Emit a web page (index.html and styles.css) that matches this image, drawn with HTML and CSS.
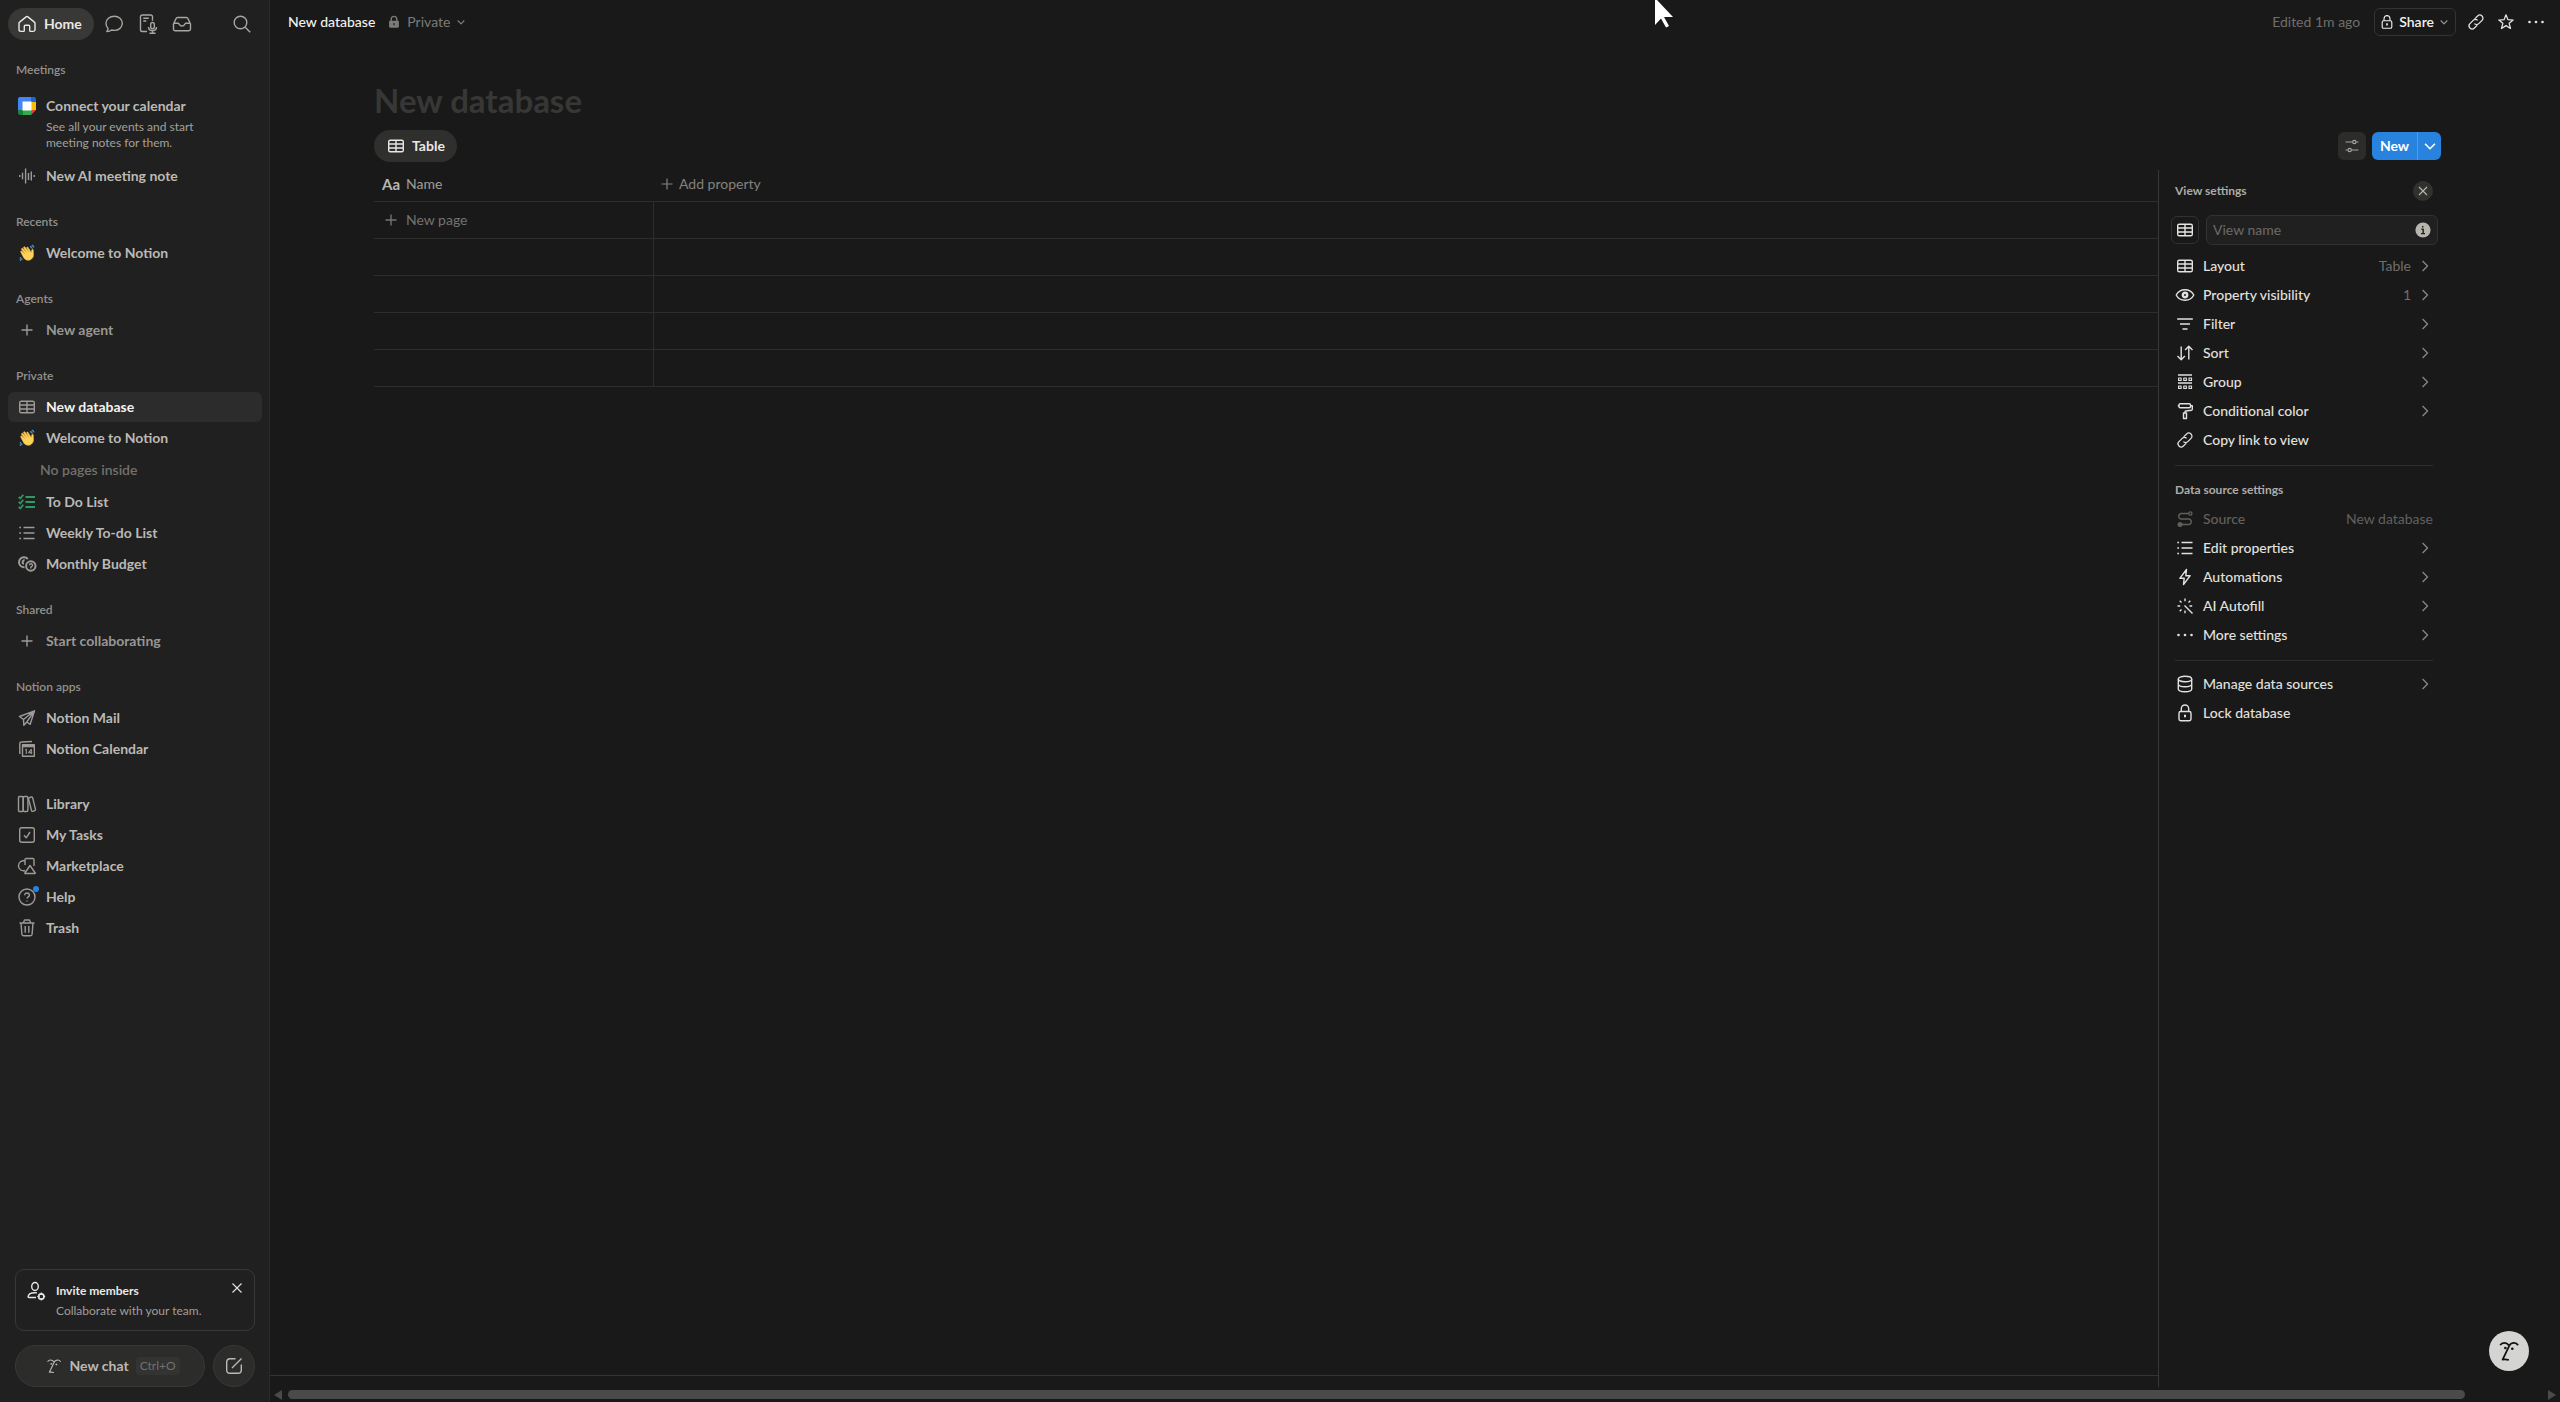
FILE: index.html
```html
<!DOCTYPE html>
<html lang="en">
<head>
<meta charset="utf-8">
<title>New database</title>
<link rel="stylesheet" href="styles.css">
</head>
<body>
<svg class="sprite" aria-hidden="true">
  <symbol id="home" viewBox="0 0 20 20"><path d="M2 9.300c0-.5.2-.9.6-1.200l6.500-5.200a1.500 1.500 0 0 1 1.800 0l6.500 5.200c.4.300.6.700.6 1.200v6.300a1.800 1.800 0 0 1-1.800 1.800h-2.700a.8.800 0 0 1-.8-.8v-4.300a1 1 0 0 0-1-1H8.300a1 1 0 0 0-1 1v4.300a.8.800 0 0 1-.8.800H3.800A1.800 1.800 0 0 1 2 15.600z"/></symbol>
  <symbol id="chat" viewBox="0 0 20 20"><path d="M10.300 2.200c4.500 0 8 3 8 7.100s-3.500 7.100-8 7.100c-.9 0-1.800-.1-2.600-.4-1 .9-2.800 1.600-4.900 1.600.9-.9 1.300-1.900 1.300-3A7 7 0 0 1 2 9.300c0-4.100 3.700-7.100 8.300-7.100z"/></symbol>
  <symbol id="note" viewBox="0 0 20 20"><path d="M9 17.500H4.300a1.800 1.800 0 0 1-1.800-1.800V2.800A1.800 1.800 0 0 1 4.300 1h8.400a1.800 1.800 0 0 1 1.800 1.800v4M5.300 4.300h5.500M5.300 7h3M14.500 8.500a1.800 1.800 0 0 1 1.800 1.800v2.600a1.800 1.800 0 0 1-3.600 0v-2.600a1.800 1.800 0 0 1 1.800-1.800zM10.500 13c0 2.300 1.800 3.700 4 3.700s4-1.400 4-3.700M14.500 16.700v2.500M11.500 19.200h6"/></symbol>
  <symbol id="inbox" viewBox="0 0 20 20"><path d="M1.500 10 4 4.600a1.800 1.800 0 0 1 1.700-1.100h8.600A1.800 1.800 0 0 1 16 4.600l2.500 5.400v5a1.700 1.700 0 0 1-1.700 1.700H3.200A1.700 1.700 0 0 1 1.500 15zM1.500 9.200h4.700c1 0 1 2.800 3.800 2.800s2.800-2.800 3.800-2.800h4.700"/></symbol>
  <symbol id="search" viewBox="0 0 20 20"><circle cx="8.500" cy="8.500" r="6.300"/><path d="m13.200 13.200 5 5"/></symbol>
  <symbol id="gcal" viewBox="0 0 18 18"><path d="M2 0h11v5H5v8H0V2a2 2 0 0 1 2-2z" fill="#4285f4"/><path d="M13 0h3a2 2 0 0 1 2 2v3h-5z" fill="#1967d2"/><path d="M13 5h5v8h-5z" fill="#fbbc04"/><path d="M5 13h8v5H5z" fill="#34a853"/><path d="M0 13h5v5H2a2 2 0 0 1-2-2z" fill="#188038"/><path d="M13 13h5l-5 5z" fill="#ea4335"/><path d="M4.500 4.500h9v9h-9z" fill="#fff"/></symbol>
  <symbol id="wave" viewBox="0 0 20 20"><path d="M3.800 9.200c-.6-.9.500-1.800 1.200-1L8 11 4.600 6.600c-.6-1 .6-1.900 1.400-1l3.500 4-2.900-4.700c-.5-1 .8-1.700 1.400-.8l3.700 5-1.900-4c-.4-1 .8-1.500 1.300-.7l3.100 5c.3-1 .1-2.300.9-3 .8-.5 1.300.2 1.200 1l.2 4.200c.1 2.400-1.300 4.500-3.400 5.300-2.600.9-4.800.1-6.300-1.900z" fill="#ffd25a" stroke="#f2b13a" stroke-width=".6"/><path d="M13 3.500c1.300.3 2 1.100 2.300 2.200M14.800 2.200c1.200.4 1.800 1 2.200 2.200M3.200 14.200c.3 1.300.9 2 2.200 2.400M2.800 16.500c.3.500.7.900 1.300 1.200" fill="none" stroke="#4d93c8" stroke-width="1.300"/></symbol>
  <symbol id="bars" viewBox="0 0 20 20"><path d="M2.700 9v2M5.500 6.700v6.600M8.600 2.500v15M11.500 7v7M14.300 5.500v9M17.200 9v2"/></symbol>
  <symbol id="plus" viewBox="0 0 20 20"><path d="M10 4.500v11M4.500 10h11"/></symbol>
  <symbol id="table" viewBox="0 0 20 20"><rect x="2.700" y="4.200" width="14.600" height="11.600" rx="1.600"/><path d="M2.700 8h14.600M2.700 12h14.600M10 4.200v11.600"/></symbol>
  <symbol id="checks" viewBox="0 0 20 20"><path d="M8.500 5h9.500M8.500 10h9.500M8.500 15h9.500M1.800 4.800l1.500 1.700 3-3.700M1.800 9.800l1.500 1.700 3-3.700M1.800 14.800l1.500 1.700 3-3.700"/></symbol>
  <symbol id="list" viewBox="0 0 20 20"><path d="M6.500 4.500h11M6.500 10h11M6.500 15.500h11M2.300 4.500H4M2.300 10H4M2.300 15.500H4"/></symbol>
  <symbol id="coins" viewBox="0 0 20 20"><path d="M7.500 13.200A5 5 0 1 1 10.800 5M7.700 6.300c-2.400-.4-2.900 3.400-.7 3.500" stroke-width="2"/><circle cx="13.800" cy="12" r="4.700" stroke-width="2"/><path d="M12.500 11.200a1.500 1.500 0 1 1 2.500 1.100l-1.200.8v1.300"/></symbol>
  <symbol id="plane" viewBox="0 0 20 20"><path d="M17.500 2.800 2.500 8.500l4 3 .3 5.700 3-3.200 3.400 2.300zM6.500 11.500l11-8.700-7.700 11.200"/></symbol>
  <symbol id="cal" viewBox="0 0 20 20"><path d="M2.800 15V4.600C2.800 3.600 3.500 3 4.500 3L15 2.500M5.500 5.800h11.800v11.500H5.500z"/><path d="M5.500 7h11.800" stroke-width="2.600"/><path d="m8.300 11 1-.7v4.800M14.300 15.100v-4.800l-2.700 3.400h3.600" stroke-width="1.100"/></symbol>
  <symbol id="library" viewBox="0 0 20 20"><rect x="1.500" y="2.500" width="4.700" height="15" rx="1.200"/><rect x="6.200" y="2.500" width="4.700" height="15" rx="1.200"/><path d="m12 3.900 2.300-.9c.6-.2 1.100 0 1.300.7l2.900 11.700c.1.600-.1 1-.7 1.200l-2 .7c-.6.200-1 0-1.200-.6L11.500 5c-.2-.6 0-.9.500-1.100z"/></symbol>
  <symbol id="task" viewBox="0 0 20 20"><rect x="2.700" y="2.700" width="14.600" height="14.600" rx="2"/><path d="m7 10.300 2.200 2.500L13 7"/></symbol>
  <symbol id="market" viewBox="0 0 20 20"><path d="M8 14.500A5 5 0 1 1 8 5M8 9V3.700C8 3 8.400 2.500 9.200 2.500h6.600c.8 0 1.200.5 1.200 1.200V10M13 9.500l5.200 7.500c.2.300 0 .5-.3.500H8.200c-.3 0-.5-.3-.3-.5z"/></symbol>
  <symbol id="help" viewBox="0 0 20 20"><circle cx="10" cy="10" r="8"/><path d="M7.700 8.200c0-3 4.700-2.900 4.700 0 0 1.700-2.300 1.700-2.300 3.400M10 13.500v1"/></symbol>
  <symbol id="trash" viewBox="0 0 20 20"><path d="M2.500 5h15M6.500 5l.6-2.300c.1-.5.500-.7 1-.7h3.800c.5 0 .9.200 1 .7l.6 2.300M4 5l.9 11.300c.1 1 .7 1.500 1.600 1.500h7c.9 0 1.500-.5 1.600-1.500L16 5M8.200 8v6.800M11.800 8v6.800"/></symbol>
  <symbol id="member" viewBox="0 0 20 20"><ellipse cx="9" cy="5.500" rx="3.300" ry="4"/><path d="M10 16.500H3c-.6 0-1-.3-.9-.9.400-2.300 3-3.900 6.700-3.900.8 0 1.500.1 2.200.2"/><circle cx="15.300" cy="15.500" r="2.700" stroke-width="1.700"/><path d="M15.300 11.600v2.200M15.300 17.200v2.200M11.400 15.500h2.200M17 15.500h2.200" stroke-width="1.200"/></symbol>
  <symbol id="x" viewBox="0 0 20 20"><path d="m5 5 10 10M15 5 5 15"/></symbol>
  <symbol id="face" viewBox="0 0 20 20"><path d="M2 4.700C3.500 2 7.800 1.700 9.800 4.800M10 5.500c1.500-3.400 6.300-4.100 8.300-.8M10.200 5.300 4.200 17.800c2-.3 3.700-.2 5.700.4"/><circle cx="6.700" cy="7.300" r="1.200" fill="currentColor" stroke="none"/><circle cx="13" cy="8" r="1.200" fill="currentColor" stroke="none"/></symbol>
  <symbol id="compose" viewBox="0 0 20 20"><path d="M11.500 2.800H6A3.300 3.300 0 0 0 2.700 6v8A3.300 3.300 0 0 0 6 17.300h8a3.300 3.300 0 0 0 3.300-3.300V8.500M8 12l9.500-9.500"/></symbol>
  <symbol id="lockfill" viewBox="0 0 20 20"><path d="M6 9V6a4 4 0 0 1 8 0v3"/><path d="M4.500 8.200h11c.8 0 1.500.6 1.500 1.400v7c0 .9-.7 1.600-1.500 1.600h-11c-.8 0-1.500-.7-1.500-1.600v-7c0-.8.700-1.400 1.500-1.400zm4.700 3.300v3.300h1.600v-3.300z" fill="currentColor" fill-rule="evenodd" stroke="none"/></symbol>
  <symbol id="lock" viewBox="0 0 20 20"><path d="M6.300 8.500V5.700a3.700 3.700 0 0 1 7.400 0v2.800"/><rect x="4" y="8.500" width="12" height="9.300" rx="1.700"/><path d="M10 11.700v2.600" stroke-width="2"/></symbol>
  <symbol id="down" viewBox="0 0 20 20"><path d="m4.500 7.500 5.500 5.500 5.500-5.500"/></symbol>
  <symbol id="right" viewBox="0 0 20 20"><path d="m7.300 4.500 5.500 5.500-5.500 5.500"/></symbol>
  <symbol id="link" viewBox="0 0 20 20"><path d="m8.500 6.500 3.300-3.200a3.400 3.400 0 0 1 4.900 4.900l-3.600 3.600a3.400 3.400 0 0 1-4.900 0M11.500 13.500l-3.300 3.200a3.400 3.400 0 0 1-4.900-4.900l3.600-3.600a3.400 3.400 0 0 1 4.900 0"/></symbol>
  <symbol id="star" viewBox="0 0 20 20"><path d="m10 2 2.200 5.400 5.800.4-4.500 3.700 1.500 5.700-5-3.200-5 3.200 1.500-5.700L2 7.800l5.800-.4z"/></symbol>
  <symbol id="dots" viewBox="0 0 20 20"><g fill="currentColor" stroke="none"><circle cx="3.500" cy="10" r="1.300"/><circle cx="10" cy="10" r="1.300"/><circle cx="16.500" cy="10" r="1.300"/></g></symbol>
  <symbol id="sliders" viewBox="0 0 20 20"><path d="M2 5h8.500M15.300 5H18M2 15h2.700M9.500 15H18"/><circle cx="12.900" cy="5" r="2.100"/><circle cx="7.100" cy="15" r="2.100"/></symbol>
  <symbol id="info" viewBox="0 0 20 20"><circle cx="10" cy="10" r="9.500" fill="#b8b5af" stroke="none"/><path d="M8 9h2.200v5.500M7.500 14.500h5M9.700 5v1.800" stroke="#202020" stroke-width="1.800"/></symbol>
  <symbol id="eye" viewBox="0 0 20 20"><path d="M1.200 10C3 6.500 6.200 4.700 10 4.700s7 1.800 8.800 5.300c-1.800 3.500-5 5.300-8.800 5.300S3 13.500 1.200 10z"/><circle cx="10" cy="10" r="2.200" stroke-width="2.400"/></symbol>
  <symbol id="filter" viewBox="0 0 20 20"><path d="M2.200 5h15.600M5 10h10M7.500 15h5"/></symbol>
  <symbol id="sort" viewBox="0 0 20 20"><path d="M6.200 3.500v13M2.500 13l3.700 3.700L9.900 13M13.800 16.500v-13M10.100 7l3.700-3.700L17.500 7"/></symbol>
  <symbol id="group" viewBox="0 0 20 20"><path d="M3 3h14M3 11h14"/><path d="M3.600 6h2.500v2.500H3.600zM8.800 6h2.500v2.500H8.800zM14 6h2.500v2.500H14zM3.600 14h2.500v2.500H3.600zM8.800 14h2.500v2.500H8.800zM14 14h2.500v2.500H14z" stroke-width="1.200"/></symbol>
  <symbol id="roller" viewBox="0 0 20 20"><rect x="4" y="2.700" width="11.500" height="4" rx="1.300"/><path d="M4 4.700H2.800M15.500 4.700h1.800v3.600c0 .5-.3.800-.8.900l-5.700.8c-.5.100-.8.400-.8.900v1M8.500 12h3v5.500h-3z"/></symbol>
  <symbol id="source" viewBox="0 0 20 20"><path d="M13 4.500H6a2.800 2.800 0 0 0 0 5.500h8a2.800 2.800 0 0 1 0 5.500H6.500"/><circle cx="15.300" cy="4.500" r="1.600"/><circle cx="5" cy="15.500" r="1.800" fill="currentColor"/></symbol>
  <symbol id="bolt" viewBox="0 0 20 20"><path d="M11.500 2.500 4.800 11.300h4.400l-.7 6.200 6.700-8.800h-4.400z"/></symbol>
  <symbol id="wand" viewBox="0 0 20 20"><path d="m9.500 9.500 8 8M10 2.500v2.700M10 14.500v2.700M2.500 10h2.700M14.500 10h2.700M4.700 4.700l1.800 1.800M15.300 4.700l-1.800 1.800M4.700 15.300l1.800-1.800"/></symbol>
  <symbol id="db" viewBox="0 0 20 20"><ellipse cx="10" cy="5" rx="6.700" ry="2.700"/><path d="M3.300 5v10c0 1.500 3 2.700 6.700 2.700s6.700-1.200 6.700-2.700V5M3.300 10c0 1.500 3 2.700 6.700 2.700s6.700-1.200 6.700-2.700"/></symbol>
</svg>

<div class="app">
  <aside class="sidebar">
    <nav class="switcher" aria-label="Workspace">
      <a class="pill" href="#"><svg class="icon"><use href="#home"/></svg>Home</a>
      <button class="tool" aria-label="Chat"><svg class="icon"><use href="#chat"/></svg></button>
      <button class="tool" aria-label="Meeting notes"><svg class="icon"><use href="#note"/></svg></button>
      <button class="tool" aria-label="Inbox"><svg class="icon"><use href="#inbox"/></svg></button>
      <button class="tool search" aria-label="Search"><svg class="icon"><use href="#search"/></svg></button>
    </nav>
    <nav class="sections" aria-label="Pages">
      <section class="section">
        <h2 class="label">Meetings</h2>
        <a class="connect" href="#">
          <svg class="gcal"><use href="#gcal"/></svg>
          <span class="connect-text"><span class="connect-title">Connect your calendar</span><span class="small">See all your events and start<br>meeting notes for them.</span></span>
        </a>
        <a class="item" href="#"><svg class="icon"><use href="#bars"/></svg>New AI meeting note</a>
      </section>
      <section class="section">
        <h2 class="label">Recents</h2>
        <a class="item" href="#"><svg class="icon"><use href="#wave"/></svg>Welcome to Notion</a>
      </section>
      <section class="section">
        <h2 class="label">Agents</h2>
        <a class="item dim" href="#"><svg class="icon"><use href="#plus"/></svg>New agent</a>
      </section>
      <section class="section">
        <h2 class="label">Private</h2>
        <a class="item active" href="#"><svg class="icon"><use href="#table"/></svg>New database</a>
        <a class="item" href="#"><svg class="icon"><use href="#wave"/></svg>Welcome to Notion</a>
        <p class="empty">No pages inside</p>
        <a class="item" href="#"><svg class="icon green"><use href="#checks"/></svg>To Do List</a>
        <a class="item" href="#"><svg class="icon"><use href="#list"/></svg>Weekly To-do List</a>
        <a class="item" href="#"><svg class="icon"><use href="#coins"/></svg>Monthly Budget</a>
      </section>
      <section class="section">
        <h2 class="label">Shared</h2>
        <a class="item dim" href="#"><svg class="icon"><use href="#plus"/></svg>Start collaborating</a>
      </section>
      <section class="section">
        <h2 class="label">Notion apps</h2>
        <a class="item" href="#"><svg class="icon"><use href="#plane"/></svg>Notion Mail</a>
        <a class="item" href="#"><svg class="icon"><use href="#cal"/></svg>Notion Calendar</a>
      </section>
      <section class="section utilities">
        <a class="item" href="#"><svg class="icon"><use href="#library"/></svg>Library</a>
        <a class="item" href="#"><svg class="icon"><use href="#task"/></svg>My Tasks</a>
        <a class="item" href="#"><svg class="icon"><use href="#market"/></svg>Marketplace</a>
        <a class="item help" href="#"><svg class="icon"><use href="#help"/></svg>Help<span class="badge"></span></a>
        <a class="item" href="#"><svg class="icon"><use href="#trash"/></svg>Trash</a>
      </section>
    </nav>
    <div class="foot">
      <div class="invite">
        <svg class="icon"><use href="#member"/></svg>
        <div class="invite-text"><strong>Invite members</strong><span>Collaborate with your team.</span></div>
        <button class="dismiss" aria-label="Dismiss"><svg class="icon s18"><use href="#x"/></svg></button>
      </div>
      <div class="chatbar">
        <button class="newchat"><svg class="icon"><use href="#face"/></svg>New chat<kbd>Ctrl+O</kbd></button>
        <button class="compose" aria-label="New page"><svg class="icon"><use href="#compose"/></svg></button>
      </div>
    </div>
  </aside>

  <main class="main">
    <header class="topbar">
      <a class="crumb" href="#">New database</a>
      <button class="privacy"><svg class="icon s14"><use href="#lockfill"/></svg>Private<svg class="icon s12"><use href="#down"/></svg></button>
      <span class="edited">Edited 1m ago</span>
      <button class="share"><svg class="icon s16"><use href="#lock"/></svg>Share<svg class="icon s12"><use href="#down"/></svg></button>
      <button class="action" aria-label="Copy link"><svg class="icon s18"><use href="#link"/></svg></button>
      <button class="action" aria-label="Favorite"><svg class="icon s18"><use href="#star"/></svg></button>
      <button class="action" aria-label="More"><svg class="icon"><use href="#dots"/></svg></button>
    </header>
    <h1 class="title">New database</h1>
    <div class="toolbar">
      <button class="tab"><svg class="icon"><use href="#table"/></svg>Table</button>
      <button class="settings" aria-label="View settings"><svg class="icon s16"><use href="#sliders"/></svg></button>
      <div class="new"><button class="new-main">New</button><button class="new-more" aria-label="Templates"><svg class="icon s18"><use href="#down"/></svg></button></div>
    </div>
    <div class="content">
      <div class="tablearea">
        <table class="grid">
          <thead>
            <tr><th><span class="head"><span class="aa">Aa</span>Name</span></th><th><button class="head add"><svg class="icon"><use href="#plus"/></svg>Add property</button></th></tr>
          </thead>
          <tbody>
            <tr><td><button class="newpage"><svg class="icon"><use href="#plus"/></svg>New page</button></td><td></td></tr>
            <tr><td></td><td></td></tr>
            <tr><td></td><td></td></tr>
            <tr><td></td><td></td></tr>
            <tr><td></td><td></td></tr>
          </tbody>
        </table>
        <div class="calc"></div>
      </div>
      <aside class="panel">
        <div class="panel-head"><h2>View settings</h2><button class="close" aria-label="Close"><svg class="icon s16"><use href="#x"/></svg></button></div>
        <div class="namerow">
          <button class="viewicon" aria-label="View icon"><svg class="icon"><use href="#table"/></svg></button>
          <div class="field"><input type="text" placeholder="View name" aria-label="View name"><svg class="icon s16"><use href="#info"/></svg></div>
        </div>
        <div class="rows">
          <button class="row"><svg class="icon"><use href="#table"/></svg>Layout<span class="value">Table</span><svg class="icon s18 chev"><use href="#right"/></svg></button>
          <button class="row"><svg class="icon"><use href="#eye"/></svg>Property visibility<span class="value">1</span><svg class="icon s18 chev"><use href="#right"/></svg></button>
          <button class="row"><svg class="icon"><use href="#filter"/></svg>Filter<span class="value"></span><svg class="icon s18 chev"><use href="#right"/></svg></button>
          <button class="row"><svg class="icon"><use href="#sort"/></svg>Sort<span class="value"></span><svg class="icon s18 chev"><use href="#right"/></svg></button>
          <button class="row"><svg class="icon"><use href="#group"/></svg>Group<span class="value"></span><svg class="icon s18 chev"><use href="#right"/></svg></button>
          <button class="row"><svg class="icon"><use href="#roller"/></svg>Conditional color<span class="value"></span><svg class="icon s18 chev"><use href="#right"/></svg></button>
          <button class="row"><svg class="icon s18"><use href="#link"/></svg>Copy link to view</button>
        </div>
        <hr>
        <h2 class="group-title">Data source settings</h2>
        <div class="rows">
          <button class="row off" disabled><svg class="icon"><use href="#source"/></svg>Source<span class="value end">New database</span></button>
          <button class="row"><svg class="icon"><use href="#list"/></svg>Edit properties<span class="value"></span><svg class="icon s18 chev"><use href="#right"/></svg></button>
          <button class="row"><svg class="icon"><use href="#bolt"/></svg>Automations<span class="value"></span><svg class="icon s18 chev"><use href="#right"/></svg></button>
          <button class="row"><svg class="icon"><use href="#wand"/></svg>AI Autofill<span class="value"></span><svg class="icon s18 chev"><use href="#right"/></svg></button>
          <button class="row"><svg class="icon"><use href="#dots"/></svg>More settings<span class="value"></span><svg class="icon s18 chev"><use href="#right"/></svg></button>
        </div>
        <hr>
        <div class="rows last">
          <button class="row"><svg class="icon"><use href="#db"/></svg>Manage data sources<span class="value"></span><svg class="icon s18 chev"><use href="#right"/></svg></button>
          <button class="row"><svg class="icon"><use href="#lock"/></svg>Lock database</button>
        </div>
      </aside>
    </div>
    <div class="scrollbar" aria-hidden="true">
      <svg class="arrow" viewBox="0 0 8 10"><path d="M8 0v10L0 5z"/></svg>
      <div class="track"><div class="thumb"></div></div>
      <svg class="arrow" viewBox="0 0 8 10"><path d="M0 0v10l8-5z"/></svg>
    </div>
  </main>
</div>
<button class="fab" aria-label="Ask AI"><svg class="icon"><use href="#face"/></svg></button>
<svg class="pointer" viewBox="0 0 18 28" aria-hidden="true"><path d="M0 0h2l16 17H9l5 9-3 1.500-5-9L0 25z"/></svg>
</body>
</html>
```
FILE: styles.css
```css
* { box-sizing: border-box; }

:root {
  --line: #2d2d2c;
  --muted: #7d7b78;
}

body {
  margin: 0;
  background: #191919;
  color: #e6e5e3;
  font: 14px/20px "Lato", "Liberation Sans", sans-serif;
}

a { color: inherit; text-decoration: none; }

button {
  display: flex;
  align-items: center;
  margin: 0;
  padding: 0;
  border: 0;
  background: none;
  color: inherit;
  font: inherit;
}

h1, h2, p { margin: 0; font: inherit; }

.sprite { position: absolute; width: 0; height: 0; }

.icon {
  flex: none;
  width: 20px;
  height: 20px;
  fill: none;
  stroke: currentColor;
  stroke-width: 1.4;
  stroke-linecap: butt;
  stroke-linejoin: round;
}
.icon.s18 { width: 18px; height: 18px; }
.icon.s16 { width: 16px; height: 16px; }
.icon.s14 { width: 14px; height: 14px; stroke-width: 2; }
.icon.s12 { width: 12px; height: 12px; stroke-width: 2; }

.app { display: flex; min-height: 100vh; }

/* Sidebar */
.sidebar {
  display: flex;
  flex: none;
  flex-direction: column;
  width: 270px;
  padding: 8px 7px 15px 8px;
  border-right: 1px solid #2a2a2a;
  background: #202020;
}

.switcher { display: flex; align-items: center; height: 32px; color: #a8a6a2; }
.pill {
  display: flex;
  align-items: center;
  gap: 7px;
  height: 32px;
  margin-right: 3px;
  padding: 0 12px 0 9px;
  border-radius: 16px;
  background: #383836;
  color: #e9e8e6;
  font-weight: 700;
}
.tool { justify-content: center; width: 34px; height: 32px; }
.tool.search { margin-left: auto; margin-right: 3px; }

.sections { display: flex; flex-direction: column; gap: 16px; margin-top: 15px; }
.section { display: flex; flex-direction: column; gap: 1px; }
.utilities { margin-top: 9px; }

.label {
  padding: 0 8px;
  color: #93918d;
  font-size: 12px;
  font-weight: 600;
  line-height: 30px;
}

.item {
  display: flex;
  align-items: center;
  gap: 9px;
  height: 30px;
  padding: 0 9px;
  border-radius: 6px;
  color: #bbb9b5;
  font-weight: 700;
}
.item .icon { color: #9d9b97; }
.item.dim { color: #999793; }
.item.active { background: #2c2c2c; color: #f3f2f0; }
.item .icon.green { color: #2d9964; stroke-width: 1.8; }
.help { position: relative; }
.badge {
  position: absolute;
  top: 4px;
  left: 25px;
  width: 6px;
  height: 6px;
  border-radius: 50%;
  background: #2383e2;
}
.empty { padding-left: 32px; color: #73716e; font-weight: 600; line-height: 32px; }

.connect { display: flex; gap: 10px; padding: 10px 10px 9px; color: #bbb9b5; }
.gcal { flex: none; width: 18px; height: 18px; margin-top: 1px; }
.connect-text { display: flex; flex-direction: column; gap: 3px; }
.connect-title { font-weight: 700; }
.small { color: #a3a19d; font-size: 12px; line-height: 16px; }

.foot { display: flex; flex-direction: column; gap: 14px; margin-top: auto; padding: 0 7px; }
.invite {
  display: flex;
  gap: 10px;
  height: 62px;
  padding: 11px 8px 11px 10px;
  border: 1px solid #383836;
  border-radius: 9px;
}
.invite-text {
  display: flex;
  flex: 1;
  flex-direction: column;
  color: #a09e9a;
  font-size: 12px;
}
.invite-text strong { color: #e9e8e6; }
.dismiss { align-self: flex-start; margin-top: -2px; }
.dismiss .icon { stroke-width: 1.2; }
.chatbar { display: flex; gap: 8px; }
.newchat, .compose {
  justify-content: center;
  height: 42px;
  border: 1px solid #383836;
  border-radius: 21px;
  background: #2c2c2b;
  color: #bbb9b5;
}
.newchat { flex: 1; gap: 7px; padding-left: 6px; font-weight: 700; }
.newchat .icon { width: 16px; height: 16px; }
.newchat kbd {
  padding: 0 4px;
  border-radius: 4px;
  background: #333332;
  color: #72706d;
  font: 12px/18px "Lato", sans-serif;
}
.compose { width: 42px; }

/* Page */
.main { display: flex; flex: 1; flex-direction: column; min-width: 0; }

.topbar { display: flex; align-items: center; height: 44px; padding: 0 9px 0 18px; }
.crumb { color: #f3f2f0; font-weight: 500; }
.privacy { gap: 6px; margin-left: 12px; color: var(--muted); }
.privacy .s12 { margin-left: -1px; }
.edited { margin: 0 14px 0 auto; color: #706e6b; }
.share {
  gap: 4px;
  height: 28px;
  margin-right: 5px;
  padding: 0 5px 0 4px;
  border: 1px solid #343433;
  border-radius: 6px;
  color: #f3f2f0;
  font-weight: 600;
}
.share .s12 { color: #94928e; }
.action { justify-content: center; width: 30px; height: 28px; }

.title {
  margin-top: 35px;
  padding: 0 104px;
  color: #373736;
  font-size: 33px;
  font-weight: 700;
  line-height: 42px;
}

.toolbar { display: flex; align-items: center; margin-top: 9px; padding: 0 119px 0 104px; }
.tab {
  gap: 6px;
  height: 32px;
  margin-right: auto;
  padding: 0 12px;
  border-radius: 16px;
  background: #2f2f2e;
  color: #e9e8e6;
  font-weight: 700;
}
.settings {
  justify-content: center;
  width: 28px;
  height: 28px;
  margin-right: 6px;
  border-radius: 6px;
  background: #2c2c2b;
  color: #a8a6a2;
}
.new { display: flex; height: 28px; border-radius: 6px; background: #2783de; color: #fff; font-weight: 700; }
.new-main { justify-content: center; width: 45px; }
.new-more { justify-content: center; width: 24px; border-left: 1px solid #4f98e2; }
.new-more .icon { stroke-width: 1.8; }

.content { display: flex; flex: 1; margin-top: 4px; }
.tablearea { display: flex; flex: 1; flex-direction: column; justify-content: space-between; }
.grid { align-self: stretch; margin-left: 104px; border-spacing: 0; table-layout: fixed; }
.grid th, .grid td { height: 37px; padding: 0; border-bottom: 1px solid var(--line); text-align: left; font-weight: 400; }
.grid th { height: 36px; color: #a09e9a; }
.grid th:first-child, .grid td:first-child { width: 280px; }
.grid td:first-child { border-right: 1px solid var(--line); }
.head { display: flex; align-items: center; gap: 6px; padding-left: 8px; }
.head.add { gap: 2px; padding-left: 3px; color: #84827e; }
.add .icon { stroke-width: 1.2; }
.aa { color: #b8b6b2; font-size: 15px; font-weight: 700; }
.newpage { gap: 5px; padding-left: 7px; color: #75736f; }
.calc { height: 12px; border-top: 1px solid #343433; }

/* View settings */
.panel {
  flex: none;
  width: 402px;
  margin-top: 4px;
  padding: 11px 122px 0 12px;
  border-left: 1px solid #373736;
}
.panel-head { display: flex; align-items: center; justify-content: space-between; height: 20px; padding: 0 5px 0 4px; }
.panel h2 { color: #aeaca8; font-size: 12px; font-weight: 700; }
.close { justify-content: center; width: 20px; height: 20px; border-radius: 50%; background: #31312f; color: #b8b6b2; }
.namerow { display: flex; align-items: center; gap: 7px; margin-top: 14px; }
.viewicon { justify-content: center; width: 28px; height: 28px; border: 1px solid #31312f; border-radius: 6px; }
.field {
  display: flex;
  flex: 1;
  align-items: center;
  height: 30px;
  padding: 0 6px;
  border: 1px solid #31312f;
  border-radius: 6px;
  background: #202020;
}
.field input { flex: 1; min-width: 0; padding: 0; border: 0; background: none; color: inherit; font: inherit; }
.field input::placeholder { color: #6c6a67; opacity: 1; }
.rows { display: flex; flex-direction: column; gap: 1px; margin-top: 7px; padding: 0 5px 0 4px; }
.row { height: 28px; gap: 8px; color: #e2e1df; font-weight: 500; text-align: left; }
.row .icon.s18 { margin: 0 1px; }
.value { margin-left: auto; color: #706e6b; font-weight: 400; }
.row .icon.chev { margin: 0 -1px 0 -3px; color: #8a8884; }
.row.off { color: #62605e; }
.row.off .value { color: #62605e; }
.panel hr { height: 1px; margin: 11px 5px 0 4px; border: 0; background: var(--line); }
.panel .group-title { margin-top: 14px; padding-left: 4px; line-height: 20px; }
.group-title + .rows { margin-top: 5px; }
.rows.last { margin-top: 9px; }

/* Horizontal scrollbar */
.scrollbar { display: flex; align-items: center; gap: 6px; height: 15px; padding: 0 4px; }
.arrow { flex: none; width: 8px; height: 10px; fill: #4a4a4a; }
.track { flex: 1; padding-right: 77px; }
.thumb { height: 9px; border-radius: 5px; background: #4a4a4a; }

.fab {
  position: fixed;
  right: 31px;
  bottom: 31px;
  justify-content: center;
  width: 40px;
  height: 40px;
  border-radius: 50%;
  background: #d4d4d3;
  color: #111;
}
.fab .icon { width: 22px; height: 22px; stroke-width: 1.6; }

.pointer { position: absolute; top: 0; left: 1655px; width: 18px; height: 28px; fill: #fff; }
```
